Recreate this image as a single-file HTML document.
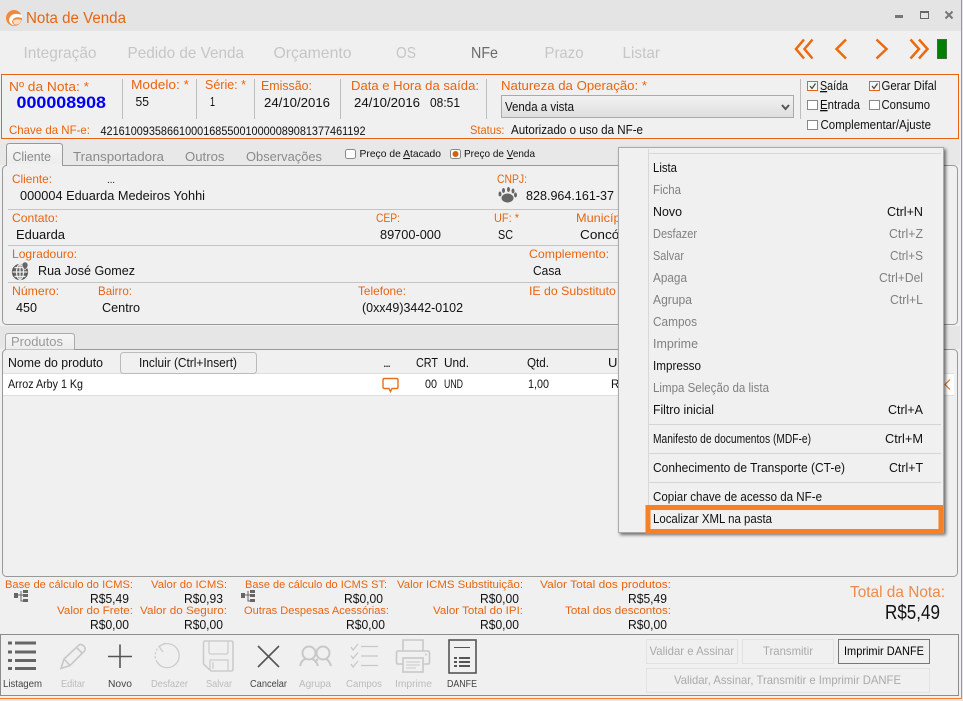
<!DOCTYPE html>
<html><head><meta charset="utf-8"><title>Nota de Venda</title>
<style>
html,body{margin:0;padding:0;width:963px;height:701px;overflow:hidden;background:#f0f0f0}
svg{display:block;position:absolute;left:0;top:0;font-family:"Liberation Sans",sans-serif;font-size:13px}
text{fill:#111;white-space:pre}
.o{fill:#e8650f}
.l{font-size:12px}
.g{fill:#8a8a8a}
.m{fill:#808080}
</style></head><body>
<svg width="963" height="701" viewBox="0 0 963 701" xmlns="http://www.w3.org/2000/svg">
<defs>
<linearGradient id="cb" x1="0" y1="0" x2="0" y2="1"><stop offset="0" stop-color="#f2f2f2"/><stop offset="1" stop-color="#dedede"/></linearGradient>
<linearGradient id="tb" x1="0" y1="0" x2="0" y2="1"><stop offset="0" stop-color="#f6f6f6"/><stop offset="1" stop-color="#ececec"/></linearGradient>
</defs>
<rect width="963" height="701" fill="#f0f0f0"/>
<rect width="963" height="31" fill="#e4e4e4"/>
<rect x="0" y="139" width="960" height="26" fill="#e8e8e8"/>
<rect x="961" y="0" width="1" height="699" fill="#f08030"/>
<rect x="962" y="0" width="1" height="701" fill="#e6e6e6"/>
<rect x="0" y="698" width="962" height="1" fill="#f08030"/>
<rect x="0" y="699" width="963" height="2" fill="#e6e6e6"/>

<!-- logo -->
<circle cx="14" cy="18" r="8" fill="#f08a3c"/>
<path d="M9 20 C10 14 15 12.500 22 15 L22 18 C17 16.500 13 17 12 22 Q13 25 16 25.500 Q10 25.500 9 20 Z" fill="#fff"/>
<path d="M13 21 C15 19 18 19 21.500 20 L20 23 Q17 25.500 14 24 Z" fill="#fbdcc6"/>
<text x="26" y="23" textLength="100" lengthAdjust="spacingAndGlyphs" style="font-size:15.500px" class="o">Nota de Venda</text>
<!-- window buttons -->
<rect x="895" y="15" width="8" height="3" fill="#777"/>
<rect x="920.500" y="11.500" width="8" height="7" fill="none" stroke="#666"/><rect x="920" y="11" width="9" height="2" fill="#666"/>
<path d="M945.500 11.500L952.500 18.500M952.500 11.500L945.500 18.500" stroke="#777" stroke-width="2"/>

<!-- top tabs -->
<text x="23.500" y="58" textLength="73" lengthAdjust="spacingAndGlyphs" style="fill:#c6c6c6;font-size:16px">Integração</text>
<text x="127.500" y="58" textLength="116.500" lengthAdjust="spacingAndGlyphs" style="fill:#c6c6c6;font-size:16px">Pedido de Venda</text>
<text x="273.500" y="58" textLength="78" lengthAdjust="spacingAndGlyphs" style="fill:#c6c6c6;font-size:16px">Orçamento</text>
<text x="396" y="58" textLength="20" lengthAdjust="spacingAndGlyphs" style="fill:#c6c6c6;font-size:16px">OS</text>
<text x="471" y="58" textLength="27" lengthAdjust="spacingAndGlyphs" style="fill:#6b6b6b;font-size:16px">NFe</text>
<text x="544.500" y="58" textLength="39" lengthAdjust="spacingAndGlyphs" style="fill:#c6c6c6;font-size:16px">Prazo</text>
<text x="622.500" y="58" textLength="37.500" lengthAdjust="spacingAndGlyphs" style="fill:#c6c6c6;font-size:16px">Listar</text>
<!-- nav arrows -->
<g fill="none" stroke="#ea6a12" stroke-width="2.500">
<path d="M804 39.500L796 49L804 58.500M812.500 39.500L804.500 49L812.500 58.500"/>
<path d="M846 39.500L836.500 49L846 58.500"/>
<path d="M876.500 39.500L886.500 49L876.500 58.500"/>
<path d="M910.500 39.500L919 49L910.500 58.500M919 39.500L927.500 49L919 58.500"/>
</g>
<rect x="937.500" y="39.500" width="9" height="19" fill="#008000" stroke="#3f6f3f"/>

<!-- header box -->
<rect x="1.500" y="74.500" width="957" height="64" fill="#f0f0f0" stroke="#e8650f"/>
<g fill="#bdbdbd"><rect x="122" y="79" width="1" height="40"/><rect x="196" y="79" width="1" height="40"/><rect x="254" y="79" width="1" height="40"/><rect x="340" y="79" width="1" height="40"/><rect x="486" y="79" width="1" height="40"/><rect x="800" y="79" width="1" height="40"/></g>
<text class="o" x="9" y="91" textLength="80" lengthAdjust="spacingAndGlyphs">Nº da Nota: *</text>
<text class="o" x="131" y="89" textLength="58" lengthAdjust="spacingAndGlyphs">Modelo: *</text>
<text class="o" x="205" y="89" textLength="41" lengthAdjust="spacingAndGlyphs">Série: *</text>
<text class="o" x="261" y="90" textLength="51" lengthAdjust="spacingAndGlyphs">Emissão:</text>
<text class="o" x="351" y="90" textLength="128" lengthAdjust="spacingAndGlyphs">Data e Hora da saída:</text>
<text class="o" x="501" y="90" textLength="146" lengthAdjust="spacingAndGlyphs">Natureza da Operação: *</text>
<text x="16.500" y="108" textLength="89.500" lengthAdjust="spacingAndGlyphs" style="font-size:17px;font-weight:bold;fill:#0000f0">000008908</text>
<text x="135.500" y="106" textLength="13.500" lengthAdjust="spacingAndGlyphs">55</text>
<text x="210" y="106" textLength="5" lengthAdjust="spacingAndGlyphs">1</text>
<text x="264" y="107" textLength="66" lengthAdjust="spacingAndGlyphs">24/10/2016</text>
<text x="354" y="107" textLength="66" lengthAdjust="spacingAndGlyphs">24/10/2016</text>
<text x="430" y="107" textLength="30" lengthAdjust="spacingAndGlyphs">08:51</text>
<text class="o l" x="9" y="134" textLength="81" lengthAdjust="spacingAndGlyphs">Chave da NF-e:</text>
<text x="100.500" y="135" textLength="265" lengthAdjust="spacingAndGlyphs" style="font-size:11.500px">42161009358661000168550010000089081377461192</text>
<rect x="501.500" y="95.500" width="292" height="22" fill="url(#cb)" stroke="#aaa"/>
<text x="505" y="111" textLength="69" lengthAdjust="spacingAndGlyphs">Venda a vista</text>
<path d="M782 105L785.500 109L789 105" fill="none" stroke="#555" stroke-width="2"/>
<text class="o l" x="470" y="134" textLength="34.500" lengthAdjust="spacingAndGlyphs">Status:</text>
<text x="511" y="134" textLength="132" lengthAdjust="spacingAndGlyphs">Autorizado o uso da NF-e</text>
<!-- checkboxes -->
<g fill="#fff">
<rect x="807.500" y="81.500" width="10" height="9" fill="#f6f6f6" stroke="#e8650f"/>
<rect x="869.500" y="81.500" width="10" height="9" fill="#f6f6f6" stroke="#e8650f"/>
<rect x="807.500" y="100.500" width="10" height="9" stroke="#888"/>
<rect x="869.500" y="100.500" width="10" height="9" stroke="#888"/>
<rect x="807.500" y="120.500" width="10" height="9" stroke="#888"/>
</g>
<path d="M810 86L812 88.500L815.500 83.500M872 86L874 88.500L877.500 83.500" fill="none" stroke="#444" stroke-width="1.200"/>
<text x="820" y="90" textLength="28" lengthAdjust="spacingAndGlyphs"><tspan text-decoration="underline">S</tspan>aída</text>
<text x="881.500" y="90" textLength="55" lengthAdjust="spacingAndGlyphs">Gerar Difal</text>
<text x="820" y="109" textLength="40" lengthAdjust="spacingAndGlyphs"><tspan text-decoration="underline">E</tspan>ntrada</text>
<text x="881.500" y="109" textLength="48.500" lengthAdjust="spacingAndGlyphs">Consumo</text>
<text x="820.500" y="129" textLength="110.500" lengthAdjust="spacingAndGlyphs">Complementar/Ajuste</text>

<!-- client tabs -->
<rect x="2.500" y="165.500" width="955" height="159" rx="4" fill="#f0f0f0" stroke="#999"/>
<path d="M6.500 165.500V146.500Q6.500 143.500 9.500 143.500H59.500Q62.500 143.500 62.500 146.500V165.500" fill="url(#tb)" stroke="#999"/>
<rect x="7" y="164" width="55" height="3" fill="#f0f0f0"/>
<text x="12.500" y="161" textLength="38.500" lengthAdjust="spacingAndGlyphs" class="g">Cliente</text>
<text x="73" y="161" textLength="91" lengthAdjust="spacingAndGlyphs" class="g">Transportadora</text>
<text x="185" y="161" textLength="39.500" lengthAdjust="spacingAndGlyphs" class="g">Outros</text>
<text x="246" y="161" textLength="76" lengthAdjust="spacingAndGlyphs" class="g">Observações</text>
<rect x="345.500" y="149.500" width="10" height="9" rx="2" fill="#fff" stroke="#888"/>
<text x="359.500" y="157" textLength="81.500" lengthAdjust="spacingAndGlyphs" style="font-size:10.500px">Preço de <tspan text-decoration="underline">A</tspan>tacado</text>
<rect x="450.500" y="149.500" width="10" height="9" rx="2" fill="#fff" stroke="#888"/>
<circle cx="455.500" cy="154" r="3" fill="#d2600f"/>
<text x="464" y="157" textLength="71" lengthAdjust="spacingAndGlyphs" style="font-size:10.500px">Preço de <tspan text-decoration="underline">V</tspan>enda</text>

<!-- client data -->
<g fill="#c4c4c4"><rect x="8" y="209" width="612" height="1"/><rect x="8" y="245" width="612" height="1"/><rect x="8" y="282" width="612" height="1"/></g>
<text class="o l" x="12" y="183" textLength="40" lengthAdjust="spacingAndGlyphs">Cliente:</text>
<text x="107" y="183" textLength="8" lengthAdjust="spacing" style="font-size:10px">...</text>
<text x="20" y="200" textLength="185" lengthAdjust="spacingAndGlyphs">000004 Eduarda Medeiros Yohhi</text>
<text class="o l" x="497" y="183" textLength="30" lengthAdjust="spacingAndGlyphs">CNPJ:</text>
<g fill="#666"><ellipse cx="507.500" cy="198" rx="6" ry="4.500"/><ellipse cx="500" cy="194" rx="1.500" ry="2.500"/><ellipse cx="503.500" cy="190.500" rx="1.500" ry="2.500"/><ellipse cx="508.500" cy="189.500" rx="1.500" ry="2.500"/><ellipse cx="513" cy="191" rx="1.500" ry="2.500"/><ellipse cx="515.500" cy="195" rx="1.500" ry="2.500"/></g>
<text x="526" y="200" textLength="88" lengthAdjust="spacingAndGlyphs">828.964.161-37</text>

<text class="o l" x="12" y="222" textLength="46" lengthAdjust="spacingAndGlyphs">Contato:</text>
<text x="16" y="239" textLength="49" lengthAdjust="spacingAndGlyphs">Eduarda</text>
<text class="o l" x="376" y="222" textLength="24" lengthAdjust="spacingAndGlyphs">CEP:</text>
<text x="380" y="239" textLength="61" lengthAdjust="spacingAndGlyphs">89700-000</text>
<text class="o l" x="494" y="222" textLength="25" lengthAdjust="spacingAndGlyphs">UF: *</text>
<text x="498" y="239" textLength="15" lengthAdjust="spacingAndGlyphs">SC</text>
<text class="o l" x="576" y="222" textLength="58" lengthAdjust="spacingAndGlyphs">Município:</text>
<text x="580" y="239" textLength="62" lengthAdjust="spacingAndGlyphs">Concórdia</text>

<text class="o l" x="12" y="258" textLength="65" lengthAdjust="spacingAndGlyphs">Logradouro:</text>
<g fill="none" stroke="#555" stroke-width="1.200"><circle cx="20" cy="272" r="7.500" fill="#666"/><path d="M12.500 272H27.500M20 264.500V279.500M14.500 267.500H25.500M14.500 276.500H25.500" stroke="#eee"/><ellipse cx="20" cy="272" rx="3.500" ry="7.500" stroke="#eee"/></g>
<path d="M25 262a3 3 0 0 1 3 3c0 2-3 5-3 5s-3-3-3-5a3 3 0 0 1 3-3z" fill="#666" stroke="#f0f0f0" stroke-width=".6"/>
<text x="38" y="275" textLength="97" lengthAdjust="spacingAndGlyphs">Rua José Gomez</text>
<text class="o l" x="529" y="258" textLength="80" lengthAdjust="spacingAndGlyphs">Complemento:</text>
<text x="533" y="275" textLength="28" lengthAdjust="spacingAndGlyphs">Casa</text>

<text class="o l" x="12" y="295" textLength="47" lengthAdjust="spacingAndGlyphs">Número:</text>
<text class="o l" x="98" y="295" textLength="34" lengthAdjust="spacingAndGlyphs">Bairro:</text>
<text class="o l" x="358" y="295" textLength="48" lengthAdjust="spacingAndGlyphs">Telefone:</text>
<text class="o l" x="529" y="295" textLength="145" lengthAdjust="spacingAndGlyphs">IE do Substituto Tributário:</text>
<text x="16" y="312" textLength="21" lengthAdjust="spacingAndGlyphs">450</text>
<text x="102" y="312" textLength="38" lengthAdjust="spacingAndGlyphs">Centro</text>
<text x="362" y="312" textLength="101" lengthAdjust="spacingAndGlyphs">(0xx49)3442-0102</text>

<!-- strip between panels -->
<rect x="0" y="326" width="960" height="23" fill="#e6e6e6"/>
<!-- products -->
<rect x="2.500" y="349.500" width="955" height="227" rx="4" fill="#f0f0f0" stroke="#999"/>
<path d="M5.500 349.500V336.500Q5.500 333.500 8.500 333.500H71.500Q74.500 333.500 74.500 336.500V349.500" fill="url(#tb)" stroke="#aaa"/>
<text x="11" y="346" textLength="52" lengthAdjust="spacingAndGlyphs" style="fill:#999">Produtos</text>
<rect x="3" y="374" width="951" height="21" fill="#fff"/>
<rect x="3" y="373" width="951" height="1" fill="#ddd"/>
<rect x="3" y="395" width="951" height="1" fill="#ddd"/>
<text x="8" y="367" textLength="95" lengthAdjust="spacingAndGlyphs">Nome do produto</text>
<rect x="120.500" y="352.500" width="136" height="21" rx="3" fill="#f0f0f0" stroke="#bbb"/>
<text x="139" y="367" textLength="98" lengthAdjust="spacingAndGlyphs">Incluir (Ctrl+Insert)</text>
<text x="383" y="367" textLength="8" lengthAdjust="spacing">...</text>
<text x="416" y="367" textLength="22" lengthAdjust="spacingAndGlyphs">CRT</text>
<text x="444" y="367" textLength="25" lengthAdjust="spacingAndGlyphs">Und.</text>
<text x="527" y="367" textLength="22" lengthAdjust="spacingAndGlyphs">Qtd.</text>
<text x="608" y="367">Unit.</text>
<text x="8" y="388" textLength="75" lengthAdjust="spacingAndGlyphs" style="font-size:11.500px">Arroz Arby 1 Kg</text>
<path d="M384.500 378.500H396.500Q398 378.500 398 380V387Q398 388.500 396.500 388.500H392L390.500 391.500L389 388.500H384.500Q383 388.500 383 387V380Q383 378.500 384.500 378.500Z" fill="none" stroke="#e8701a" stroke-width="1.400"/>
<text x="425" y="388" textLength="12" lengthAdjust="spacingAndGlyphs" style="font-size:11.500px">00</text>
<text x="444" y="388" textLength="19" lengthAdjust="spacingAndGlyphs" style="font-size:11.500px">UND</text>
<text x="528" y="388" textLength="21" lengthAdjust="spacingAndGlyphs" style="font-size:11.500px">1,00</text>
<text x="611" y="388" style="font-size:11.500px">R$5,49</text>
<path d="M950 379.500L945 384.500L950 389.500" fill="none" stroke="#e8701a" stroke-width="1.100"/>

<!-- context menu -->
<rect x="618.500" y="147.500" width="325" height="385" fill="#f0f0f0" stroke="#aaa" style="filter:drop-shadow(2px 2px 1.500px rgba(0,0,0,.55))"/>
<rect x="648" y="149" width="1" height="382" fill="#d8d8d8"/>
<rect x="649" y="153" width="292" height="1" fill="#d8d8d8"/>
<rect x="649" y="424" width="292" height="1" fill="#d4d4d4"/>
<rect x="649" y="453" width="292" height="1" fill="#d4d4d4"/>
<rect x="649" y="482" width="292" height="1" fill="#d4d4d4"/>
<text x="653" y="172" textLength="24" lengthAdjust="spacingAndGlyphs">Lista</text>
<text class="m" x="653" y="194" textLength="28" lengthAdjust="spacingAndGlyphs">Ficha</text>
<text x="653" y="216" textLength="29" lengthAdjust="spacingAndGlyphs">Novo</text>
<text x="887" y="216" textLength="36" lengthAdjust="spacingAndGlyphs">Ctrl+N</text>
<text class="m" x="653" y="238" textLength="44" lengthAdjust="spacingAndGlyphs">Desfazer</text>
<text class="m" x="889" y="238" textLength="34" lengthAdjust="spacingAndGlyphs">Ctrl+Z</text>
<text class="m" x="653" y="260" textLength="31" lengthAdjust="spacingAndGlyphs">Salvar</text>
<text class="m" x="890" y="260" textLength="33" lengthAdjust="spacingAndGlyphs">Ctrl+S</text>
<text class="m" x="653" y="282" textLength="34" lengthAdjust="spacingAndGlyphs">Apaga</text>
<text class="m" x="879" y="282" textLength="44" lengthAdjust="spacingAndGlyphs">Ctrl+Del</text>
<text class="m" x="653" y="304" textLength="39" lengthAdjust="spacingAndGlyphs">Agrupa</text>
<text class="m" x="890" y="304" textLength="33" lengthAdjust="spacingAndGlyphs">Ctrl+L</text>
<text class="m" x="653" y="326" textLength="44" lengthAdjust="spacingAndGlyphs">Campos</text>
<text class="m" x="653" y="348" textLength="45" lengthAdjust="spacingAndGlyphs">Imprime</text>
<text x="653" y="370" textLength="48" lengthAdjust="spacingAndGlyphs">Impresso</text>
<text class="m" x="653" y="392" textLength="116" lengthAdjust="spacingAndGlyphs">Limpa Seleção da lista</text>
<text x="653" y="414" textLength="61" lengthAdjust="spacingAndGlyphs">Filtro inicial</text>
<text x="888" y="414" textLength="35" lengthAdjust="spacingAndGlyphs">Ctrl+A</text>
<text x="653" y="443" textLength="158" lengthAdjust="spacingAndGlyphs">Manifesto de documentos (MDF-e)</text>
<text x="885" y="443" textLength="38" lengthAdjust="spacingAndGlyphs">Ctrl+M</text>
<text x="653" y="472" textLength="192" lengthAdjust="spacingAndGlyphs">Conhecimento de Transporte (CT-e)</text>
<text x="889" y="472" textLength="34" lengthAdjust="spacingAndGlyphs">Ctrl+T</text>
<text x="653" y="501" textLength="169" lengthAdjust="spacingAndGlyphs">Copiar chave de acesso da NF-e</text>
<text x="653" y="523" textLength="119" lengthAdjust="spacingAndGlyphs">Localizar XML na pasta</text>
<rect x="648" y="507.500" width="293" height="24" fill="none" stroke="#f58025" stroke-width="5"/>

<!-- totals -->
<g style="font-size:11px">
<text class="o" x="5" y="588" textLength="128" lengthAdjust="spacingAndGlyphs">Base de cálculo do ICMS:</text>
<text class="o" x="151" y="588" textLength="76" lengthAdjust="spacingAndGlyphs">Valor do ICMS:</text>
<text class="o" x="245" y="588" textLength="142" lengthAdjust="spacingAndGlyphs">Base de cálculo do ICMS ST:</text>
<text class="o" x="397" y="588" textLength="126" lengthAdjust="spacingAndGlyphs">Valor ICMS Substituição:</text>
<text class="o" x="540" y="588" textLength="131" lengthAdjust="spacingAndGlyphs">Valor Total dos produtos:</text>
<text class="o" x="57" y="614" textLength="76" lengthAdjust="spacingAndGlyphs">Valor do Frete:</text>
<text class="o" x="140" y="614" textLength="87" lengthAdjust="spacingAndGlyphs">Valor do Seguro:</text>
<text class="o" x="244" y="614" textLength="145" lengthAdjust="spacingAndGlyphs">Outras Despesas Acessórias:</text>
<text class="o" x="433" y="614" textLength="90" lengthAdjust="spacingAndGlyphs">Valor Total do IPI:</text>
<text class="o" x="565" y="614" textLength="106" lengthAdjust="spacingAndGlyphs">Total dos descontos:</text>
</g>
<text x="90" y="603" textLength="39" lengthAdjust="spacingAndGlyphs">R$5,49</text>
<text x="184" y="603" textLength="39" lengthAdjust="spacingAndGlyphs">R$0,93</text>
<text x="344" y="603" textLength="39" lengthAdjust="spacingAndGlyphs">R$0,00</text>
<text x="480" y="603" textLength="39" lengthAdjust="spacingAndGlyphs">R$0,00</text>
<text x="628" y="603" textLength="39" lengthAdjust="spacingAndGlyphs">R$5,49</text>
<text x="90" y="629" textLength="39" lengthAdjust="spacingAndGlyphs">R$0,00</text>
<text x="184" y="629" textLength="39" lengthAdjust="spacingAndGlyphs">R$0,00</text>
<text x="346" y="629" textLength="39" lengthAdjust="spacingAndGlyphs">R$0,00</text>
<text x="480" y="629" textLength="39" lengthAdjust="spacingAndGlyphs">R$0,00</text>
<text x="628" y="629" textLength="39" lengthAdjust="spacingAndGlyphs">R$0,00</text>
<g fill="#666"><rect x="14" y="593" width="4" height="5"/><rect x="23" y="590" width="5" height="3"/><rect x="23" y="594" width="5" height="3"/><rect x="23" y="599" width="5" height="3"/><path d="M18 595H23M21 591V601H23" fill="none" stroke="#666"/></g>
<g fill="#666" transform="translate(227,0)"><rect x="14" y="593" width="4" height="5"/><rect x="23" y="590" width="5" height="3"/><rect x="23" y="594" width="5" height="3"/><rect x="23" y="599" width="5" height="3"/><path d="M18 595H23M21 591V601H23" fill="none" stroke="#666"/></g>
<text x="850" y="597" textLength="95" lengthAdjust="spacingAndGlyphs" style="font-size:16px;fill:#ee8a4a">Total da Nota:</text>
<text x="885" y="619" textLength="55" lengthAdjust="spacingAndGlyphs" style="font-size:20px">R$5,49</text>

<!-- toolbar -->
<rect x="0.500" y="634.500" width="958" height="61" fill="#f0f0f0" stroke="#8c8c8c"/>
<!-- listagem -->
<g fill="#666"><rect x="8" y="641.500" width="4" height="3"/><rect x="8" y="650.500" width="4" height="3"/><rect x="8" y="659" width="4" height="3"/><rect x="8" y="667" width="4" height="3"/><rect x="15" y="641.500" width="21" height="3"/><rect x="15" y="650.500" width="21" height="3"/><rect x="15" y="659" width="21" height="3"/><rect x="15" y="667" width="21" height="3"/></g>
<!-- editar -->
<path d="M61 668.500L64 659L79 645Q81 643.500 84 646Q86 649 84.500 651L70 665.500ZM76.500 647.500L82.500 653.500M64 659L70 665.500" fill="none" stroke="#c8c8c8" stroke-width="1.600"/>
<!-- novo -->
<path d="M120 644.500V668M108 656.500H132" stroke="#555" stroke-width="1.600" fill="none"/>
<!-- desfazer -->
<path d="M160 646A12 12 0 1 1 157 662" fill="none" stroke="#ccc" stroke-width="1.300"/>
<path d="M157 662A12 12 0 0 1 160 646" fill="none" stroke="#ccc" stroke-width="1.300" stroke-dasharray="2 2"/>
<path d="M165 643L159 646.500L163 652" fill="none" stroke="#ccc" stroke-width="1.300"/>
<!-- salvar -->
<path d="M205 641H231Q233 641 233 643V669Q233 671 231 671H211L203.500 664V643Q203.500 641 205 641Z" fill="none" stroke="#ccc" stroke-width="1.600"/>
<path d="M209 641V652Q209 654 211 654H226Q228 654 228 652V641M210 671V660H228V671M213 662V669" fill="none" stroke="#ccc" stroke-width="1.200"/>
<!-- cancelar -->
<path d="M258 646L279 667M279 646L258 667" stroke="#555" stroke-width="1.600" fill="none"/>
<!-- agrupa -->
<g fill="none" stroke="#c8c8c8" stroke-width="2"><circle cx="309" cy="653" r="6.500"/><circle cx="323" cy="653" r="6.500"/><path d="M300 666Q302 659 306 659M312 659Q316 660 318 666M318 659Q316 660 316 663M326 659Q329 660 331 666"/></g>
<!-- campos -->
<g fill="none" stroke="#c8c8c8" stroke-width="1.300"><path d="M351 647L353 650L358 644M351 664L353 667L358 661M351 655.500L353 658.500L358 652.500"/><path d="M361 646.500H378M361 656H378M361 665.500H378"/></g>
<!-- imprime -->
<g fill="none" stroke="#c8c8c8" stroke-width="1.600"><path d="M403 651V640H423V651"/><path d="M403 664H398Q396.500 664 396.500 662V653Q396.500 651 398 651H428Q429.500 651 429.500 653V662Q429.500 664 428 664H423"/><rect x="403" y="658" width="20" height="14"/><path d="M406 662H420M406 665H420M406 668H416" stroke-width="1"/></g>
<circle cx="426" cy="654.500" r="1" fill="#c8c8c8"/>
<!-- danfe -->
<rect x="449" y="640" width="27" height="33" fill="none" stroke="#555" stroke-width="1.600"/>
<g fill="#555"><rect x="454" y="647" width="16" height="1"/><rect x="454" y="657" width="3" height="2"/><rect x="459" y="657" width="11" height="2"/><rect x="454" y="661" width="3" height="2"/><rect x="459" y="661" width="11" height="2"/><rect x="454" y="665" width="3" height="2"/><rect x="459" y="665" width="11" height="2"/></g>

<text x="3" y="687" textLength="39" lengthAdjust="spacingAndGlyphs" style="fill:#444;font-size:10.500px">Listagem</text>
<text x="61" y="687" textLength="24" lengthAdjust="spacingAndGlyphs" style="fill:#bbb;font-size:10.500px">Editar</text>
<text x="108" y="687" textLength="24" lengthAdjust="spacingAndGlyphs" style="fill:#444;font-size:10.500px">Novo</text>
<text x="151" y="687" textLength="37" lengthAdjust="spacingAndGlyphs" style="fill:#bbb;font-size:10.500px">Desfazer</text>
<text x="206" y="687" textLength="26" lengthAdjust="spacingAndGlyphs" style="fill:#bbb;font-size:10.500px">Salvar</text>
<text x="250" y="687" textLength="37" lengthAdjust="spacingAndGlyphs" style="fill:#444;font-size:10.500px">Cancelar</text>
<text x="299" y="687" textLength="32" lengthAdjust="spacingAndGlyphs" style="fill:#bbb;font-size:10.500px">Agrupa</text>
<text x="346" y="687" textLength="36" lengthAdjust="spacingAndGlyphs" style="fill:#bbb;font-size:10.500px">Campos</text>
<text x="395" y="687" textLength="37" lengthAdjust="spacingAndGlyphs" style="fill:#bbb;font-size:10.500px">Imprime</text>
<text x="447" y="687" textLength="30" lengthAdjust="spacingAndGlyphs" style="fill:#444;font-size:10.500px">DANFE</text>
<!-- buttons -->
<g fill="none" stroke="#e2e2e2"><rect x="646.500" y="639.500" width="91" height="24"/><rect x="742.500" y="639.500" width="91" height="24"/><rect x="646.500" y="668.500" width="283" height="24"/></g>
<rect x="838.500" y="639.500" width="91" height="24" fill="none" stroke="#777"/>
<text x="649.500" y="655" textLength="84.500" lengthAdjust="spacingAndGlyphs" style="font-size:12px;fill:#aaa">Validar e Assinar</text>
<text x="763" y="655" textLength="50" lengthAdjust="spacingAndGlyphs" style="font-size:12px;fill:#aaa">Transmitir</text>
<text x="844" y="655" textLength="80" lengthAdjust="spacingAndGlyphs" style="font-size:12px;fill:#000">Imprimir DANFE</text>
<text x="674" y="684" textLength="227" lengthAdjust="spacingAndGlyphs" style="font-size:12px;fill:#aaa">Validar, Assinar, Transmitir e Imprimir DANFE</text>
</svg>
</body></html>
